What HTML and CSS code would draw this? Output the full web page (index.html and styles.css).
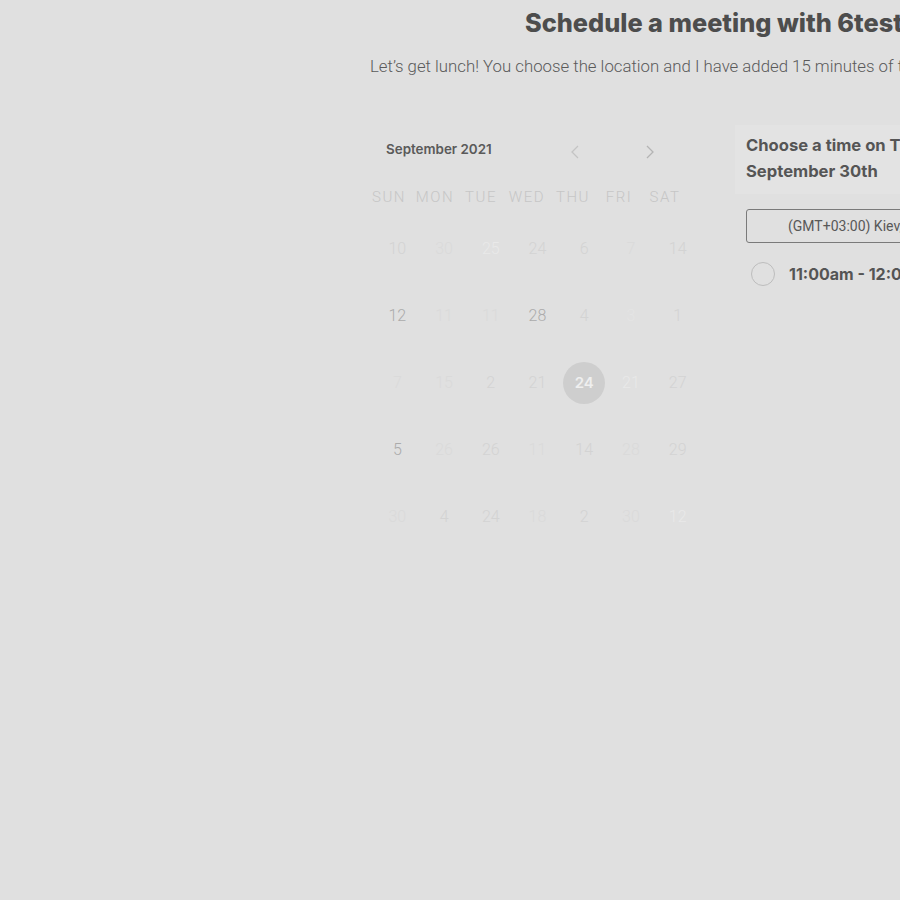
FILE: index.html
```html
<!DOCTYPE html>
<html>
<head>
<meta charset="utf-8">
<link rel="stylesheet" href="styles.css">
</head>
<body>
<div class="page">
  <h1 class="title">Schedule a meeting with 6testuser</h1>
  <p class="subtitle">Let’s get lunch! You choose the location and I have added 15 minutes of travel time.</p>
  <div class="main">
    <div class="calendar">
      <div class="cal-head">
        <span class="month">September 2021</span>
        <div class="arrows">
          <svg class="arrow" width="10" height="14" viewBox="0 0 10 14"><path d="M8 1 L2 7 L8 13" fill="none" stroke="#c4c4c4" stroke-width="1.3"/></svg>
          <svg class="arrow" width="10" height="14" viewBox="0 0 10 14"><path d="M2 1 L8 7 L2 13" fill="none" stroke="#b4b4b4" stroke-width="1.3"/></svg>
        </div>
      </div>
      <div class="weekdays">
        <span class="wd">SUN</span><span class="wd">MON</span><span class="wd">TUE</span><span class="wd">WED</span><span class="wd">THU</span><span class="wd">FRI</span><span class="wd">SAT</span>
      </div>
      <div class="grid">
        <span class="d dim">10</span><span class="d faint">30</span><span class="d light">25</span><span class="d dim">24</span><span class="d dim">6</span><span class="d faint">7</span><span class="d dim">14</span>

        <span class="d mid">12</span><span class="d faint">11</span><span class="d faint">11</span><span class="d mid">28</span><span class="d dim">4</span><span class="d flight">3</span><span class="d dim">1</span>

        <span class="d faint">7</span><span class="d faint">15</span><span class="d dim">2</span><span class="d dim">21</span><span class="d"><span class="sel">24</span></span><span class="d light">21</span><span class="d dim">27</span>

        <span class="d mid">5</span><span class="d faint">26</span><span class="d dim">26</span><span class="d faint">11</span><span class="d dim">14</span><span class="d faint">28</span><span class="d dim">29</span>

        <span class="d faint">30</span><span class="d dim">4</span><span class="d dim">24</span><span class="d faint">18</span><span class="d dim">2</span><span class="d faint">30</span><span class="d light">12</span>
      </div>
    </div>
    <div class="side">
      <div class="side-head">Choose a time on Thursday,<br>September 30th</div>
      <div class="tz">(GMT+03:00) Kiev, Ukraine</div>
      <label class="slot"><span class="radio"></span><span class="slot-text">11:00am - 12:00pm</span></label>
    </div>
  </div>
</div>
</body>
</html>
```

FILE: styles.css
```css
html, body {
  margin: 0;
  padding: 0;
  background: #e0e0e0;
  overflow: hidden;
}
.page {
  width: 1200px;
  padding-left: 370px;
  font-family: Roboto, "Liberation Sans", sans-serif;
}
.title {
  margin: 0;
  padding: 7px 0 0 155px;
  font-family: Inter, "Liberation Sans", sans-serif;
  font-weight: 800;
  font-size: 25.3px;
  line-height: 32px;
  color: #4d4d4d;
  white-space: nowrap;
}
.subtitle {
  margin: 0;
  padding-top: 17px;
  font-size: 16.8px;
  line-height: 20px;
  font-weight: 300;
  color: #5a5a5a;
  white-space: nowrap;
}
.main {
  display: flex;
  margin-top: 56px;
  gap: 34px;
}
.calendar {
  width: 327px;
  margin-left: 4px;
}
.cal-head {
  display: flex;
  align-items: center;
  height: 40px;
  padding-left: 12px;
}
.month {
  font-family: Inter, "Liberation Sans", sans-serif;
  font-weight: 600;
  font-size: 13.4px;
  color: #5a5a5a;
  width: 184px;
  margin-top: -7px;
}
.arrows {
  display: flex;
  gap: 65px;
}
.arrow {
  display: block;
}
.weekdays {
  display: grid;
  grid-template-columns: repeat(7, 46px);
  margin: 7px 0 0 -8px;
  height: 36px;
}
.wd {
  line-height: 36px;
  text-align: center;
  font-size: 15px;
  font-weight: 300;
  letter-spacing: 1.5px;
  color: #c6c6c6;
}
.grid {
  display: grid;
  grid-template-columns: repeat(7, 1fr);
  grid-auto-rows: 67px;
}
.d {
  display: flex;
  align-items: center;
  justify-content: center;
  font-size: 16px;
  font-weight: 300;
}
.dim { color: #d3d3d3; }
.faint { color: #dadada; }
.flight { color: #e4e4e4; }
.mid { color: #ababab; }
.light { color: #e9e9e9; }
.sel {
  display: flex;
  align-items: center;
  justify-content: center;
  width: 42px;
  height: 42px;
  border-radius: 50%;
  background: #cecece;
  color: #efefef;
  font-weight: 600;
  font-family: Inter, "Liberation Sans", sans-serif;
  font-size: 15px;
}
.side {
  width: 300px;
  flex: none;
}
.side-head {
  margin-top: -7px;
  padding: 7px 11px 10px;
  background: #e3e3e3;
  font-family: Inter, "Liberation Sans", sans-serif;
  font-weight: 700;
  font-size: 16.6px;
  line-height: 26px;
  color: #555;
  white-space: nowrap;
}
.tz {
  margin: 15px 0 0 11px;
  height: 32px;
  border: 1px solid #7a7a7a;
  border-radius: 3px;
  padding-left: 41px;
  line-height: 32px;
  font-size: 14px;
  color: #585858;
  white-space: nowrap;
}
.slot {
  display: flex;
  align-items: center;
  gap: 14px;
  margin: 19px 0 0 16px;
}
.radio {
  width: 24px;
  height: 24px;
  border: 1.5px solid #bdbdbd;
  border-radius: 50%;
  box-sizing: border-box;
}
.slot-text {
  font-family: Inter, "Liberation Sans", sans-serif;
  font-weight: 700;
  font-size: 16px;
  color: #555;
  white-space: nowrap;
}
```
